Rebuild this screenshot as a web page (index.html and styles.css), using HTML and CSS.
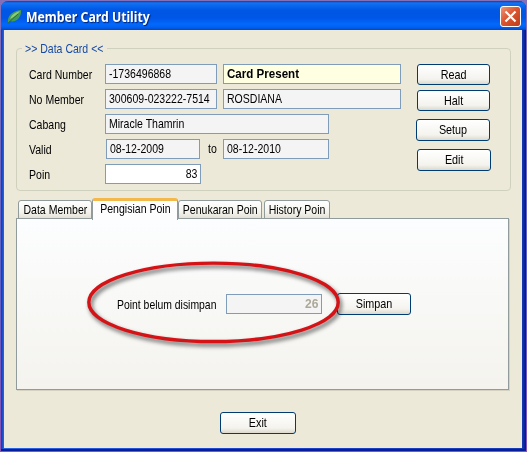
FILE: index.html
```
<!DOCTYPE html>
<html lang="id">
<head>
<meta charset="utf-8">
<title>Member Card Utility</title>
<link rel="stylesheet" href="styles.css">
</head>
<body>
<main class="window">
  <header class="titlebar">
    <svg class="leaf" width="16" height="16" viewBox="0 0 16 16">
      <path d="M1 14C0 7 5 2 14 1C15 8 9 14 3 12Z" fill="#429b50"/>
      <path d="M3 10C5 5 9 3 13 2C10 6 7 8 3 10Z" fill="#91cb78"/>
      <path d="M0 15L11 5" stroke="#287044" fill="none"/>
    </svg>
    <h1>Member Card Utility</h1>
    <button class="close" aria-label="Close">
      <svg width="19" height="19" viewBox="0 0 19 19"><path d="M4.5 4.5L14.5 14.5M14.5 4.5L4.5 14.5" stroke="#fff" stroke-width="2.2"/></svg>
    </button>
  </header>
  <div class="client">
    <fieldset class="card">
      <legend><span class="t">&gt;&gt; Data Card &lt;&lt;</span></legend>
      <div class="columns">
        <div class="rows">
          <div class="row"><label><span class="t">Card Number</span></label><div class="field w112"><span class="t">-1736496868</span></div><div class="field w178 present"><span class="t">Card Present</span></div></div>
          <div class="row"><label><span class="t">No Member</span></label><div class="field w112"><span class="t">300609-023222-7514</span></div><div class="field w178"><span class="t">ROSDIANA</span></div></div>
          <div class="row"><label><span class="t">Cabang</span></label><div class="field w224"><span class="t">Miracle Thamrin</span></div></div>
          <div class="row"><label><span class="t">Valid</span></label><div class="field date"><span class="t">08-12-2009</span></div><div class="to"><span class="t">to</span></div><div class="field w106"><span class="t">08-12-2010</span></div></div>
          <div class="row"><label><span class="t">Poin</span></label><div class="field poin"><span class="t">83</span></div></div>
        </div>
        <div class="actions">
          <button class="btn short"><span class="t">Read</span></button>
          <button class="btn short"><span class="t">Halt</span></button>
          <button class="btn setup"><span class="t">Setup</span></button>
          <button class="btn edit"><span class="t">Edit</span></button>
        </div>
      </div>
    </fieldset>
    <nav class="tabs">
      <div class="tab data"><span class="t">Data Member</span></div>
      <div class="tab active"><span class="t">Pengisian Poin</span></div>
      <div class="tab penukaran"><span class="t">Penukaran Poin</span></div>
      <div class="tab history"><span class="t">History Poin</span></div>
    </nav>
    <section class="panel">
      <div class="caption"><span class="t">Point belum disimpan</span></div>
      <div class="field pending"><span class="t">26</span></div>
      <button class="btn"><span class="t">Simpan</span></button>
      <svg class="ring" width="270" height="100" viewBox="0 0 270 100">
        <ellipse cx="133.5" cy="49.3" rx="124.7" ry="39.2"/>
      </svg>
    </section>
    <footer><button class="btn exit"><span class="t">Exit</span></button></footer>
  </div>
</main>
</body>
</html>
```

FILE: styles.css
```
* { box-sizing: border-box; }
body {
  margin: 0;
  width: 527px;
  height: 452px;
  overflow: hidden;
  padding: 1px;
  background: linear-gradient(#8470b8, #5b61c7 60%, #8854b8);
  font: 13px/18px "Liberation Sans", Arial, sans-serif;
  color: #000;
}
.window {
  width: 525px;
  height: 450px;
  display: flex;
  flex-direction: column;
  background: linear-gradient(90deg, #1038b8, #2765e4 3px, #1c44cc 50%, #173cb8 521px, #06148c);
  box-shadow: inset 0 -2px #0a1c98;
  border-radius: 7px 7px 0 0;
  overflow: hidden;
}
.titlebar {
  height: 29px;
  flex: none;
  display: flex;
  align-items: center;
  padding: 2px 5px 0 6px;
  background: linear-gradient(#0841b9 0, #1672ee 2px, #0866ef 5px, #0057e3 9px, #0056e6 17px, #0268fc 23px, #0162f3 26px, #0047ca 29px);
}
h1 {
  margin: 0 auto 0 3px;
  color: #fff;
  font: bold 14px/18px "Noto Sans", sans-serif;
  transform: scaleX(.875);
  transform-origin: left;
  text-shadow: 1px 1px 1px #002477;
}
.close {
  width: 21px;
  height: 21px;
  padding: 0;
  border: 1px solid #fff;
  border-radius: 3px;
  background: linear-gradient(135deg, #ee9576, #dc5630 45%, #bd3c19);
}
.close svg { display: block; }
/* Condensed system-dialog lettering */
.t {
  display: inline-block;
  white-space: nowrap;
  transform: scaleX(.81);
  transform-origin: left;
}
.client {
  margin: 0 4px 0 3px;
  height: 418px;
  background: #ece9d8;
  padding: 12px 0 0 12px;
}
.card {
  margin: 0;
  width: 495px;
  height: 149px;
  border: 1px solid #d0d0bf;
  border-radius: 4px;
  padding: 0 0 0 12px;
}
legend {
  width: 85px;
  height: 13px;
  line-height: 13px;
  margin-left: -7px;
  padding: 0 3px;
  color: #174aa6;
}
.columns { display: flex; padding-top: 9px; }
.rows { width: 388px; display: flex; flex-direction: column; gap: 5px; }
.row { display: flex; height: 20px; align-items: center; }
label { width: 76px; padding-top: 2px; }
.field {
  height: 20px;
  border: 1px solid #7f9db9;
  background: #f4f4f4;
  padding: 0 3px;
}
.w112 { width: 112px; margin-right: 6px; }
.w178 { width: 178px; }
.w224 { width: 224px; }
.w106 { width: 106px; }
.date { width: 94px; margin-left: 1px; }
.to { width: 23px; padding-left: 8px; }
.poin { width: 96px; text-align: right; background: #fff; }
.poin .t, .pending .t { transform-origin: right; }
.present { background: #ffffe1; font-weight: bold; }
.present .t { transform: scaleX(.89); }
.actions { width: 75px; display: flex; flex-direction: column; }
.btn {
  width: 74px;
  height: 22px;
  flex: none;
  padding: 0;
  border: 1px solid #003c74;
  border-radius: 3px;
  background: linear-gradient(#fff, #f4f3ee 75%, #dcd8cc);
  color: #000;
  font: inherit;
  line-height: 20px;
}
.btn .t, .tab .t { transform-origin: center; }
.btn .t { transform: scaleX(.83); }
.short { width: 73px; height: 21px; margin-bottom: 5px; }
.setup { margin: 3px 0 8px -1px; }
.tabs { display: flex; align-items: flex-end; height: 28px; padding-left: 2px; }
.tab {
  height: 19px;
  border: 1px solid #919b9c;
  border-radius: 3px 3px 0 0;
  background: linear-gradient(#fff, #f4f3ec 65%, #e3e1d6);
  line-height: 18px;
  display: flex;
  justify-content: center;
}
.data { width: 74px; }
.penukaran { width: 84px; }
.history { width: 66px; margin-left: 2px; }
.active {
  position: relative;
  z-index: 1;
  width: 86px;
  height: 22px;
  margin-bottom: -1px;
  border-top: 3px solid #f3b84b;
  border-bottom: 0;
  background: #fdfdfe;
  line-height: 15px;
}
.panel {
  position: relative;
  margin-top: -1px;
  width: 493px;
  height: 172px;
  border: 1px solid #919b9c;
  background: linear-gradient(#fcfdfe, #f4f3ee);
  box-shadow: 1px 1px #d5d2c1;
  display: flex;
  align-items: center;
  padding-left: 100px;
}
.caption { width: 109px; padding-top: 1px; }
.caption .t { transform: scaleX(.8); }
.pending {
  width: 96px;
  margin-right: 15px;
  text-align: right;
  color: #aca899;
  font-weight: bold;
}
.pending .t { transform: scaleX(.93); }
.ring { position: absolute; left: 63px; top: 34px; pointer-events: none; }
.ring ellipse { fill: none; stroke: #d51317; stroke-width: 3.4; filter: drop-shadow(2px 3px 2px #0009); }
footer { display: flex; padding: 22px 0 0 204px; }
.exit { width: 76px; }
```
